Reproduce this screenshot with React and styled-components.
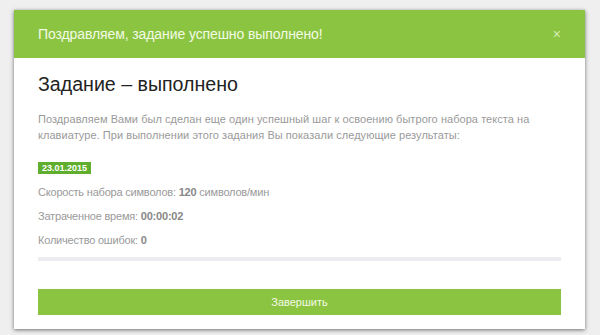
import React from 'react';
import styled, { createGlobalStyle } from 'styled-components';

const GlobalStyle = createGlobalStyle`
  html, body {
    margin: 0;
    padding: 0;
    background: #efefef;
    font-family: "Liberation Sans", Arial, sans-serif;
  }
`;

const Page = styled.div`
  width: 600px;
  height: 335px;
  padding: 10px 15px 0 14px;
  box-sizing: border-box;
`;

const Modal = styled.div`
  width: 571px;
  height: 319px;
  background: #fff;
  box-shadow: 0 1px 4px rgba(0, 0, 0, 0.55);
  display: flex;
  flex-direction: column;
`;

const Header = styled.div`
  height: 48px;
  background: #8bc440;
  display: flex;
  align-items: center;
  justify-content: space-between;
  padding: 0 24px 0 24px;
  flex-shrink: 0;
`;

const HeaderTitle = styled.h3`
  margin: 0;
  font-size: 14px;
  letter-spacing: -0.1px;
  font-weight: normal;
  color: #f3fae6;
`;

const Close = styled.span`
  font-size: 14px;
  color: #d6ecb6;
  line-height: 1;
`;

const Body = styled.div`
  padding: 14px 24px 0 24px;
  display: flex;
  flex-direction: column;
`;

const Title = styled.h2`
  margin: 0;
  font-size: 19.6px;
  font-weight: normal;
  color: #222;
  line-height: 24px;
`;

const Text = styled.p`
  margin: 15px 0 0;
  font-size: 11px;
  letter-spacing: 0.05px;
  line-height: 16px;
  color: #9a9a9a;
`;

const Badge = styled.span`
  align-self: flex-start;
  margin-top: 19px;
  background: #5fae2e;
  color: #fff;
  font-size: 9px;
  font-weight: bold;
  padding: 1px 4px;
  line-height: 10px;
`;

const Stat = styled.div`
  margin-top: ${p => p.gap}px;
  font-size: 11px;
  letter-spacing: -0.2px;
  line-height: 16px;
  color: #9a9a9a;
  b {
    color: #888;
  }
`;

const Progress = styled.div`
  margin-top: 9px;
  height: 4px;
  background: #ededf1;
`;

const Button = styled.button`
  margin-top: 28px;
  height: 26px;
  border: 0;
  background: #8bc440;
  color: #f3fae6;
  font-family: inherit;
  font-size: 11px;
  cursor: pointer;
`;

export default function App() {
  return (
    <>
      <GlobalStyle />
      <Page>
        <Modal>
          <Header>
            <HeaderTitle>Поздравляем, задание успешно выполнено!</HeaderTitle>
            <Close>×</Close>
          </Header>
          <Body>
            <Title>Задание – выполнено</Title>
            <Text>
              Поздравляем Вами был сделан еще один успешный шаг к освоению бытрого набора текста на
              клавиатуре. При выполнении этого задания Вы показали следующие результаты:
            </Text>
            <Badge>23.01.2015</Badge>
            <Stat gap={10}>Скорость набора символов: <b>120</b> символов/мин</Stat>
            <Stat gap={8}>Затраченное время: <b>00:00:02</b></Stat>
            <Stat gap={8}>Количество ошибок: <b>0</b></Stat>
            <Progress />
            <Button>Завершить</Button>
          </Body>
        </Modal>
      </Page>
    </>
  );
}
